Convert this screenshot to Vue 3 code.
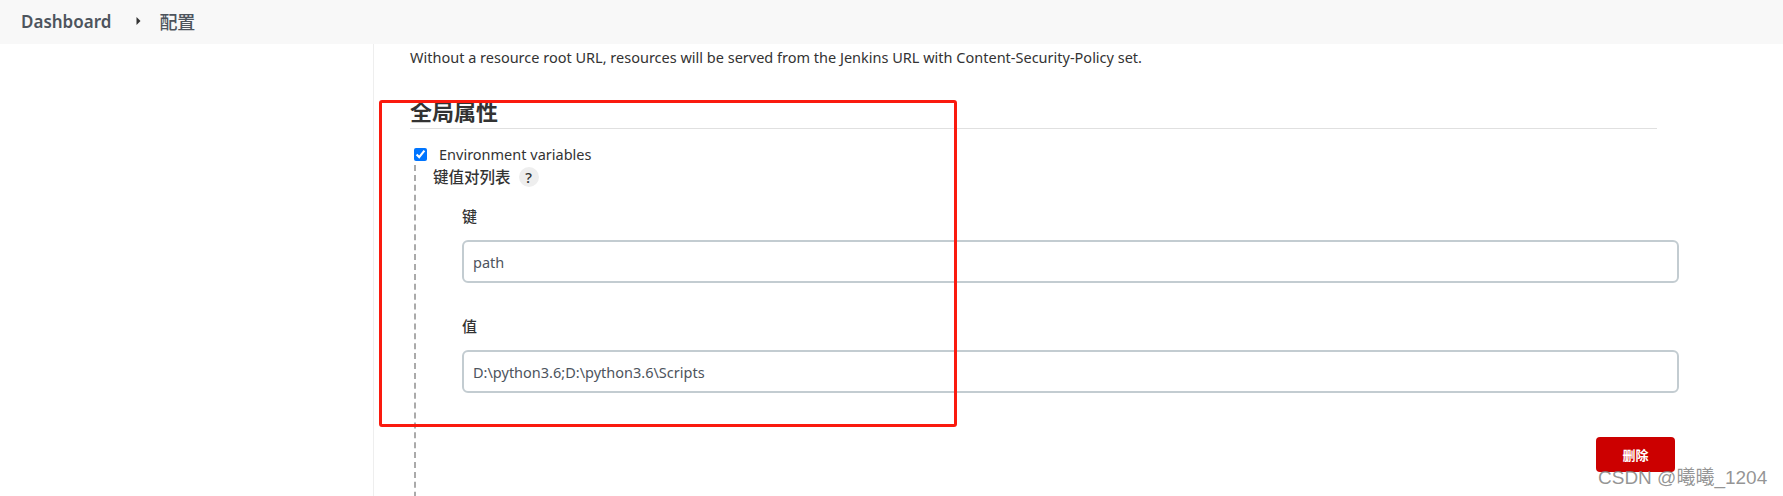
<template>
  <div class="page">
    <div class="breadcrumb-bar">
      <span class="crumb">Dashboard</span>
      <svg class="crumb-arrow" width="5" height="8" viewBox="0 0 5 8"><path d="M0.5 0 L4.5 4 L0.5 8 Z" fill="#333" /></svg>
      <span class="crumb crumb-cn">配置</span>
    </div>

    <div class="layout">
      <aside class="side-panel"></aside>
      <main class="main-panel">
        <p class="hint">{{ hint }}</p>
        <h2 class="section-title">全局属性</h2>

        <label class="check-row">
          <input type="checkbox" checked />
          <span>Environment variables</span>
        </label>

        <div class="optional-block">
          <div class="list-label">
            <span>键值对列表</span>
            <span class="help">?</span>
          </div>

          <div class="fields">
            <div v-for="field in fields" :key="field.label" class="field">
              <div class="field-label">{{ field.label }}</div>
              <input class="field-input" type="text" readonly :value="field.value" />
            </div>
          </div>

          <div class="actions">
            <button class="delete-btn" type="button">删除</button>
          </div>
        </div>
      </main>
    </div>

    <div class="annotation"></div>
    <div class="watermark">CSDN @曦曦_1204</div>
  </div>
</template>

<script setup>
const hint = 'Without a resource root URL, resources will be served from the Jenkins URL with Content-Security-Policy set.'

const fields = [
  { label: '键', value: 'path' },
  { label: '值', value: 'D:\\python3.6;D:\\python3.6\\Scripts' }
]
</script>

<style>
html,
body {
  margin: 0;
  height: 496px;
  overflow: hidden;
  background: #fff;
}
</style>

<style scoped>
.page {
  position: relative;
  width: 1783px;
  height: 496px;
  overflow: hidden;
  font-family: "Noto Sans", "Noto Sans CJK SC", sans-serif;
  font-size: 14.5px;
  color: #333;
}

.breadcrumb-bar {
  display: flex;
  align-items: center;
  box-sizing: border-box;
  height: 44px;
  padding: 0 0 2px 21px;
  background: #f8f8f8;
  color: #4d545d;
}

.crumb {
  font-size: 17px;
  font-weight: 600;
}

.crumb-cn {
  font-size: 18px;
  font-weight: 500;
}

.crumb-arrow {
  margin: 0 18px 0 25px;
}

.layout {
  display: flex;
  height: 452px;
}

.side-panel {
  width: 373px;
  border-right: 1px solid #eee;
}

.main-panel {
  padding-left: 36px;
  width: 1300px;
}

.hint {
  margin: 3px 0 0;
  line-height: 20px;
}

.section-title {
  width: 1247px;
  margin: 31px 0 0;
  font-size: 22px;
  font-weight: 600;
  line-height: 26px;
  padding-bottom: 4px;
  border-bottom: 1px solid #e0e0e0;
  color: #333;
}

.check-row {
  display: flex;
  align-items: center;
  height: 20px;
  margin: 15px 0 1px 4px;
}

.check-row input {
  width: 13px;
  height: 13px;
  margin: 0 12px 0 0;
}

.optional-block {
  margin-left: 4px;
  padding: 2px 0 0 17px;
  border-left: 2px dashed #aaa;
  height: 400px;
}

.list-label {
  display: flex;
  align-items: center;
  gap: 8px;
  font-size: 15.5px;
  line-height: 20px;
  font-weight: 500;
}

.help {
  width: 20px;
  height: 20px;
  border-radius: 50%;
  background: #eee;
  text-align: center;
  font-size: 15px;
}

.fields {
  margin-left: 29px;
  width: 1217px;
}

.field {
  padding-top: 19px;
  margin-bottom: 14px;
}

.field-label {
  font-size: 15px;
  line-height: 20px;
  font-weight: 500;
  margin-bottom: 14px;
}

.field-input {
  display: block;
  box-sizing: border-box;
  width: 100%;
  height: 43px;
  padding: 1px 9px 0;
  border: 2px solid #c3ccd1;
  border-radius: 6px;
  font: inherit;
  color: #4d545d;
  outline: none;
}

.actions {
  display: flex;
  justify-content: flex-end;
  width: 1242px;
  margin-top: 44px;
}

.delete-btn {
  width: 79px;
  height: 35px;
  padding: 0;
  border: none;
  border-radius: 4px;
  background: #c00;
  color: #fff;
  font-family: inherit;
  font-size: 13px;
  font-weight: 700;
}

.annotation {
  position: absolute;
  left: 379px;
  top: 100px;
  width: 578px;
  height: 327px;
  box-sizing: border-box;
  border: 3px solid #fa1a0e;
  border-radius: 3px;
}

.watermark {
  position: absolute;
  left: 1598px;
  top: 467px;
  font-family: "Liberation Sans", "Noto Sans CJK SC", sans-serif;
  font-size: 19px;
  line-height: 22px;
  color: rgba(130, 130, 130, 0.85);
}
</style>
